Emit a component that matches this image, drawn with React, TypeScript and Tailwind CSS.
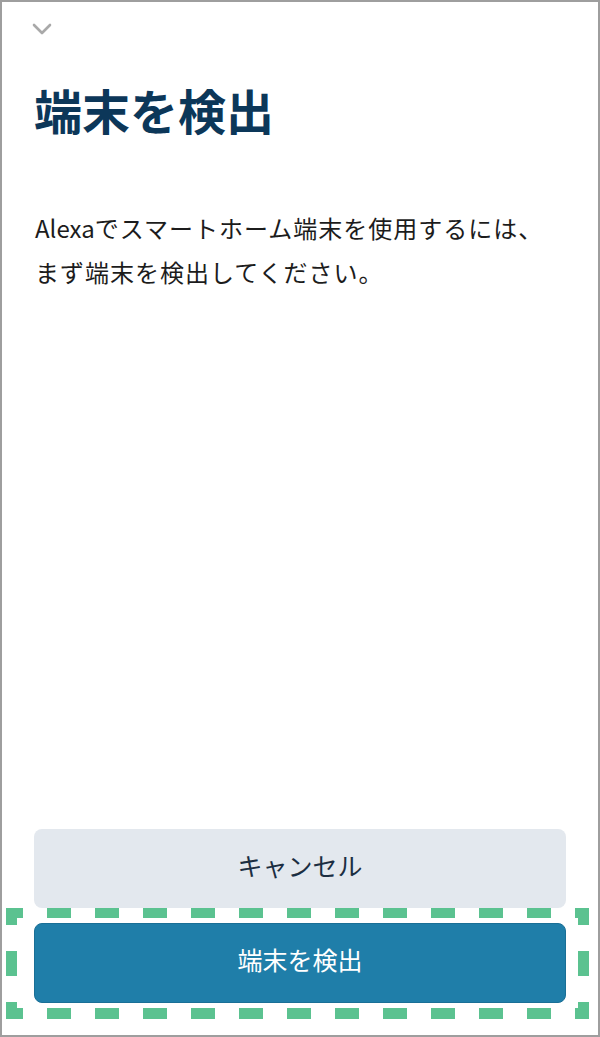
import React from 'react';

const jp = '"Noto Sans CJK JP", "Noto Sans", sans-serif';

function DashedFrame() {
  // green dashed annotation around the primary button
  return (
    <svg className="absolute inset-0 pointer-events-none" width="583" height="111" viewBox="0 0 583 111">
      <g stroke="#5bc290" fill="none" strokeLinecap="butt">
        <line x1="0" y1="5" x2="583" y2="5" strokeWidth="10" strokeDasharray="24 24" strokeDashoffset="7" />
        <line x1="0" y1="105.5" x2="583" y2="105.5" strokeWidth="11" strokeDasharray="24 24" strokeDashoffset="7" />
        <line x1="5.5" y1="0" x2="5.5" y2="111" strokeWidth="11" strokeDasharray="25 26" strokeDashoffset="8" />
        <line x1="577.5" y1="0" x2="577.5" y2="111" strokeWidth="11" strokeDasharray="25 26" strokeDashoffset="8" />
      </g>
    </svg>
  );
}

export default function App() {
  return (
    <div
      className="w-[600px] h-[1037px] border-2 border-[#9e9e9e] bg-white flex flex-col"
      style={{ fontFamily: jp }}
    >
      <div className="pl-[30px] pt-[21px]">
        <svg width="20" height="12" viewBox="0 0 20 12">
          <path d="M2 2 L10 10 L18 2" stroke="#a9a9a9" strokeWidth="2.6" fill="none" strokeLinecap="round" strokeLinejoin="round" />
        </svg>
      </div>

      <h1 className="ml-[32px] mt-[50px] text-[48px] font-bold leading-none text-[#0c3759]">端末を検出</h1>

      <p className="ml-[33px] mt-[73px] text-[24px] leading-[44px] tracking-[1px] text-[#1c1c1c]">
        <span className="tracking-normal">Alexa</span>でスマートホーム端末を使用するには、
        <br />
        まず端末を検出してください。
      </p>

      <div className="flex-1" />

      <div className="px-[32px]">
        <button className="w-[532px] h-[79px] pb-[6px] rounded-[8px] bg-[#e3e8ee] text-[25px] text-[#1b2e42] flex items-center justify-center">
          キャンセル
        </button>
      </div>

      <div className="relative ml-[4px] w-[583px] h-[111px] pt-[15px] pl-[28px]">
        <button className="w-[532px] h-[80px] pb-[6px] rounded-[8px] bg-[#1f7ea9] border border-[#1a6f96] text-[25px] text-white flex items-center justify-center">
          端末を検出
        </button>
        <DashedFrame />
      </div>

      <div className="h-[16px]" />
    </div>
  );
}
